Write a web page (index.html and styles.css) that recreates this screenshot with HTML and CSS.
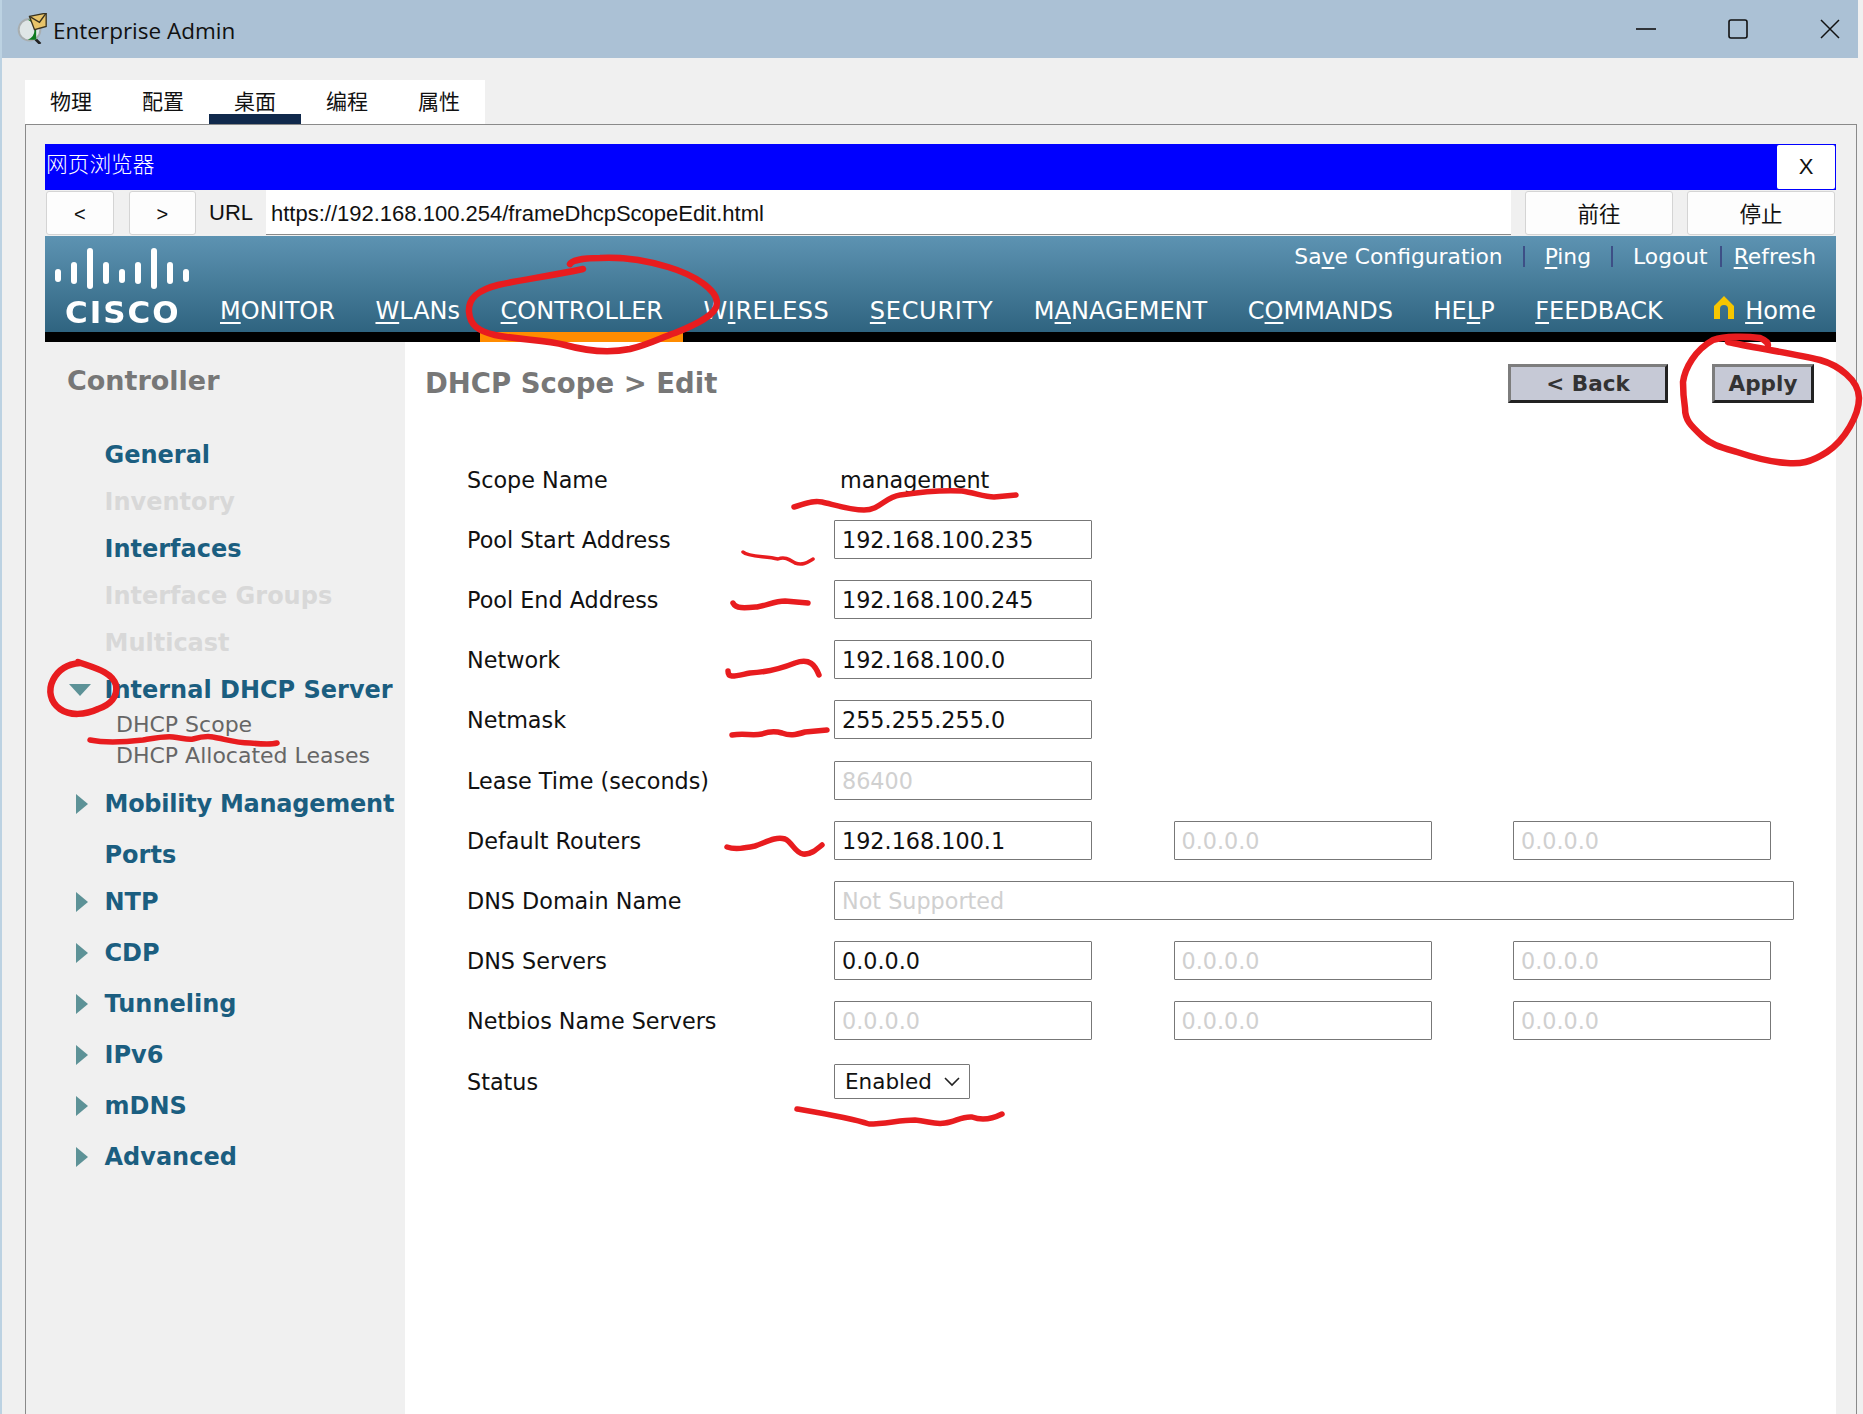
FILE: index.html
```html
<!DOCTYPE html>
<html lang="zh">
<head>
  <meta charset="UTF-8">
  <title>Enterprise Admin</title>
  <link rel="stylesheet" href="styles.css">
</head>
<body>
  <div class="page">
    <div class="titlebar">
      <svg class="app-icon" width="30" height="31" viewBox="0 0 36 37">
        <line x1="19" y1="28" x2="28" y2="37" stroke="#222" stroke-width="3.4"/>
        <circle cx="15" cy="20" r="13" fill="#dfe6e6" stroke="#a8aeb0" stroke-width="2.4"/>
        <path d="M13 8h10v24h-10a13 13 0 0 0 0-24z" fill="#0e7a1e"/>
        <path d="M15 4l20-4v16l-14 4z" fill="#e8c46a" stroke="#3a3320" stroke-width="1.6"/>
        <path d="M15 4l12 7 8-11" fill="none" stroke="#3a3320" stroke-width="1.6"/>
      </svg>
      <span class="app-name">Enterprise Admin</span>
      <div class="win-controls">
        <svg width="20" height="20" viewBox="0 0 20 20"><line x1="0" y1="10" x2="20" y2="10" stroke="#111" stroke-width="1.6"/></svg>
        <svg width="20" height="20" viewBox="0 0 20 20"><rect x="1" y="1" width="18" height="18" rx="2" fill="none" stroke="#111" stroke-width="1.6"/></svg>
        <svg width="20" height="20" viewBox="0 0 20 20"><path d="M1 1l18 18M19 1l-18 18" stroke="#111" stroke-width="1.5"/></svg>
      </div>
    </div>

    <div class="tabs">
      <div class="tab">物理</div>
      <div class="tab">配置</div>
      <div class="tab active">桌面</div>
      <div class="tab">编程</div>
      <div class="tab">属性</div>
    </div>

    <div class="panel">
      <div class="browser-title">
        <span class="browser-name">网页浏览器</span>
        <div class="close-btn">X</div>
      </div>
      <div class="url-row">
        <div class="btn nav-btn">&lt;</div>
        <div class="btn nav-btn">&gt;</div>
        <div class="url-label">URL</div>
        <div class="url-input">https://192.168.100.254/frameDhcpScopeEdit.html</div>
        <div class="btn go-btn">前往</div>
        <div class="btn go-btn">停止</div>
      </div>

      <div class="cisco-head">
        <div class="logo">
          <svg width="140" height="44" viewBox="0 0 140 44">
            <g fill="#fff">
              <rect x="0" y="21" width="6" height="13" rx="3"/>
              <rect x="16" y="14" width="6" height="22" rx="3"/>
              <rect x="32" y="0" width="6" height="41" rx="3"/>
              <rect x="48" y="14" width="6" height="22" rx="3"/>
              <rect x="64" y="21" width="6" height="14" rx="3"/>
              <rect x="80" y="14" width="6" height="22" rx="3"/>
              <rect x="96" y="0" width="6" height="41" rx="3"/>
              <rect x="112" y="14" width="6" height="22" rx="3"/>
              <rect x="128" y="21" width="6" height="13" rx="3"/>
            </g>
          </svg>
          <div class="logo-text">CISCO</div>
        </div>
        <div class="head-right">
          <div class="top-links">
            <span>Sa<u>v</u>e Configuration</span>
            <i class="sep"></i>
            <span><u>P</u>ing</span>
            <i class="sep"></i>
            <span>Logout</span>
            <i class="sep tight"></i>
            <span><u>R</u>efresh</span>
          </div>
          <div class="main-nav">
            <span><u>M</u>ONITOR</span>
            <span><u>W</u>LANs</span>
            <span><u>C</u>ONTROLLER</span>
            <span class="spaced">W<u>I</u>RELESS</span>
            <span class="spaced more"><u>S</u>ECURITY</span>
            <span>M<u>A</u>NAGEMENT</span>
            <span>C<u>O</u>MMANDS</span>
            <span>HE<u>L</u>P</span>
            <span><u>F</u>EEDBACK</span>
            <span class="home">
              <svg width="20" height="23" viewBox="0 0 20 23"><path d="M10 0L20 10v13h-6v-10a4 4 0 0 0-8 0v10H0V10z" fill="#f7c600"/></svg>
              <span><u>H</u>ome</span>
            </span>
          </div>
        </div>
      </div>
      <div class="black-bar"><div class="orange"></div></div>

      <div class="content">
        <div class="sidebar">
          <div class="side-title">Controller</div>
          <div class="side-item first"><i class="slot"></i>General</div>
          <div class="side-item off"><i class="slot"></i>Inventory</div>
          <div class="side-item"><i class="slot"></i>Interfaces</div>
          <div class="side-item off"><i class="slot"></i>Interface Groups</div>
          <div class="side-item off"><i class="slot"></i>Multicast</div>
          <div class="side-item"><i class="slot"><b class="arrow-down"></b></i>Internal DHCP Server</div>
          <div class="side-sub first-sub">DHCP Scope</div>
          <div class="side-sub">DHCP Allocated Leases</div>
          <div class="side-item after-sub tight-text"><i class="slot"><b class="arrow"></b></i>Mobility Management</div>
          <div class="side-item far"><i class="slot"></i>Ports</div>
          <div class="side-item"><i class="slot"><b class="arrow"></b></i>NTP</div>
          <div class="side-item far"><i class="slot"><b class="arrow"></b></i>CDP</div>
          <div class="side-item far"><i class="slot"><b class="arrow"></b></i>Tunneling</div>
          <div class="side-item far"><i class="slot"><b class="arrow"></b></i>IPv6</div>
          <div class="side-item far"><i class="slot"><b class="arrow"></b></i>mDNS</div>
          <div class="side-item far"><i class="slot"><b class="arrow"></b></i>Advanced</div>
        </div>

        <div class="main">
          <div class="main-head">
            <h1>DHCP Scope &gt; Edit</h1>
            <div class="actions">
              <div class="action back">&lt; Back</div>
              <div class="action apply">Apply</div>
            </div>
          </div>

          <div class="form">
            <div class="row scope"><div class="label">Scope Name</div><div class="plain">management</div></div>
            <div class="row"><div class="label">Pool Start Address</div><div class="field">192.168.100.235</div></div>
            <div class="row"><div class="label">Pool End Address</div><div class="field">192.168.100.245</div></div>
            <div class="row"><div class="label">Network</div><div class="field">192.168.100.0</div></div>
            <div class="row"><div class="label">Netmask</div><div class="field">255.255.255.0</div></div>
            <div class="row lease"><div class="label">Lease Time (seconds)</div><div class="field dis">86400</div></div>
            <div class="row"><div class="label">Default Routers</div><div class="field">192.168.100.1</div><div class="field dis">0.0.0.0</div><div class="field dis">0.0.0.0</div></div>
            <div class="row"><div class="label">DNS Domain Name</div><div class="field dis wide">Not Supported</div></div>
            <div class="row"><div class="label">DNS Servers</div><div class="field">0.0.0.0</div><div class="field dis">0.0.0.0</div><div class="field dis">0.0.0.0</div></div>
            <div class="row"><div class="label">Netbios Name Servers</div><div class="field dis">0.0.0.0</div><div class="field dis">0.0.0.0</div><div class="field dis">0.0.0.0</div></div>
            <div class="row status"><div class="label">Status</div>
              <div class="select">Enabled
                <svg width="16" height="10" viewBox="0 0 16 10"><path d="M1 1l7 7 7-7" fill="none" stroke="#222" stroke-width="1.6"/></svg>
              </div>
            </div>
          </div>
        </div>
      </div>
    </div>
  </div>

  <!-- hand drawn red marks over the page -->
  <svg class="marks" viewBox="0 0 1863 1414" fill="none" stroke="#e81c1f" stroke-linecap="round" stroke-linejoin="round">
    <g stroke-width="6.5">
      <path d="M583 269C550 276 520 280 498 285C478 290 468 298 469 312C470 325 478 331 495 335C520 340 545 340 565 345C590 352 610 353 630 349C650 344 660 338 675 333C695 325 717 315 717 303C717 290 695 275 668 267C645 260 620 257 600 258C585 258 572 260 570 264"/>
      <path d="M1728 342C1750 347 1790 353 1820 360C1838 365 1859 380 1859 398C1859 415 1845 440 1827 452C1810 463 1800 464 1787 463C1770 462 1755 458 1737 452C1720 447 1712 445 1703 437C1690 425 1685 420 1685 408C1683 395 1683 385 1683 382C1685 368 1695 350 1713 340C1725 336 1745 336 1760 338C1765 340 1768 343 1768 345"/>
      <path d="M78 662C95 668 112 672 116 685C118 697 110 705 98 709C85 715 70 716 60 709C50 702 48 690 53 680C58 670 68 664 80 663"/>
    </g>
    <g stroke-width="5.5">
      <path d="M90 740C105 743 125 742 143 740C155 738 165 736 173 737C182 738 188 740 193 739C200 737 208 736 213 737C225 739 235 743 250 743C260 744 270 745 277 743"/>
      <path d="M794 507C805 504 812 500 822 502C835 505 850 510 864 510C880 510 885 497 900 495C920 492 945 490 962 491C975 493 985 497 994 497L1016 495"/>
      <path d="M733 603C736 609 745 608 757 607C768 605 775 601 785 601L808 603"/>
      <path d="M728 671C728 679 735 676 750 673C770 672 785 667 795 663C810 658 815 665 819 675"/>
      <path d="M732 735C745 733 752 736 762 734C770 731 775 731 782 733C790 736 795 735 805 732L827 730"/>
      <path d="M727 847C735 850 745 848 755 846C765 843 775 836 785 839C792 842 795 853 803 854C810 855 816 850 822 845"/>
      <path d="M797 1109C820 1113 850 1118 869 1124C885 1124 900 1120 915 1120C928 1121 935 1125 945 1123C955 1122 962 1116 972 1117C980 1120 990 1120 1002 1114"/>
    </g>
    <path stroke-width="3.5" d="M743 552C748 557 765 556 778 559C785 556 790 560 795 563C803 566 808 562 813 559"/>
  </svg>
</body>
</html>
```

FILE: styles.css
```css
html, body {
  margin: 0;
  padding: 0;
}
body {
  position: relative;
  width: 1863px;
  height: 1414px;
  overflow: hidden;
  background: #f0f0f0;
  font-family: "DejaVu Sans", sans-serif;
  color: #111;
}
.page {
  display: flex;
  flex-direction: column;
  height: 100%;
  box-sizing: border-box;
  border-left: 2px solid #bcd2e2;
}
.marks {
  position: absolute;
  left: 0;
  top: 0;
  width: 1863px;
  height: 1414px;
  pointer-events: none;
}

/* window title */
.titlebar {
  display: flex;
  align-items: center;
  height: 58px;
  margin-right: 5px;
  padding: 0 18px 0 15px;
  background: #abc1d5;
  flex: none;
}
.app-icon {
  margin-right: 6px;
  margin-top: -2px;
  flex: none;
}
.app-name {
  font-family: "Open Sans", sans-serif;
  font-size: 22.5px;
  margin-top: 2px;
}
.win-controls {
  display: flex;
  gap: 72px;
  margin-left: auto;
}

/* tabs */
.tabs {
  display: flex;
  width: 460px;
  height: 44px;
  margin: 22px 0 0 23px;
  background: white;
  flex: none;
}
.tab {
  width: 92px;
  box-sizing: border-box;
  text-align: center;
  padding-top: 5px;
  font-family: "Noto Sans CJK SC", sans-serif;
  font-size: 21px;
  line-height: 30px;
}
.tab.active {
  border-bottom: 10px solid #10294c;
}

/* panel */
.panel {
  display: flex;
  flex-direction: column;
  flex: 1;
  min-height: 0;
  margin: 0 6px 0 23px;
  padding: 19px 20px 0 19px;
  border: 1px solid #8a8a8a;
  border-bottom: none;
}
.browser-title {
  display: flex;
  justify-content: space-between;
  align-items: center;
  height: 46px;
  padding: 0 1px;
  background: #0000ff;
  color: white;
  font-family: "Noto Sans CJK SC", sans-serif;
  font-size: 21.7px;
  font-weight: 300;
  flex: none;
}
.browser-name {
  margin-top: -9px;
}
.close-btn {
  width: 58px;
  height: 44px;
  line-height: 44px;
  text-align: center;
  background: white;
  color: #111;
  border-radius: 2px;
  font-family: "Liberation Sans", sans-serif;
  font-size: 22px;
}
.url-row {
  display: flex;
  align-items: flex-start;
  height: 46px;
  padding-left: 1px;
  font-family: "Liberation Sans", sans-serif;
  font-size: 22px;
  flex: none;
}
.btn {
  height: 44px;
  line-height: 44px;
  margin-top: 1px;
  box-sizing: border-box;
  text-align: center;
  background: #fdfdfd;
  border: 1px solid #d4d4d4;
  border-radius: 3px;
  font-size: 20px;
}
.nav-btn {
  width: 67.5px;
  margin-right: 15px;
}
.url-label {
  width: 70px;
  margin-left: -15px;
  padding-left: 13px;
  box-sizing: border-box;
  line-height: 45px;
  color: #111;
}
.url-input {
  width: 1245px;
  height: 45px;
  line-height: 47px;
  padding-left: 5px;
  box-sizing: border-box;
  background: white;
  border-bottom: 1px solid #8a8a8a;
}
.go-btn {
  width: 148px;
  margin-left: 14px;
  font-family: "Noto Sans CJK SC", sans-serif;
  font-size: 21.5px;
  line-height: 41px;
}

/* cisco header */
.cisco-head {
  display: flex;
  height: 96px;
  color: white;
  background: linear-gradient(#5d93b2, #2f6480);
  flex: none;
}
.logo {
  width: 175px;
  padding: 12px 0 0 10px;
  box-sizing: border-box;
}
.logo svg {
  display: block;
  filter: blur(0.5px);
}
.logo-text {
  margin: 2px 0 0 10px;
  font-weight: bold;
  font-size: 31px;
  line-height: 36px;
  letter-spacing: 2px;
  filter: blur(0.5px);
}
.head-right {
  display: flex;
  flex-direction: column;
  justify-content: space-between;
  flex: 1;
  padding: 5px 20px 6px 0;
}
.top-links {
  display: flex;
  justify-content: flex-end;
  align-items: center;
  height: 30px;
  font-size: 21.8px;
}
.sep {
  width: 2px;
  height: 21px;
  margin: 0 20px;
  background: #3d4f86;
}
.sep.tight {
  margin: 0 12px;
}
.main-nav {
  display: flex;
  align-items: center;
  gap: 40.6px;
  height: 30px;
  font-size: 24px;
  white-space: nowrap;
}
.spaced {
  letter-spacing: 0.5px;
}
.spaced.more {
  letter-spacing: 0.7px;
}
.cisco-head u {
  text-underline-offset: 3px;
}
.home {
  display: flex;
  align-items: center;
  gap: 11px;
  margin-left: auto;
}
.home svg {
  margin-top: -7px;
}
.black-bar {
  height: 10px;
  background: black;
  flex: none;
}
.orange {
  width: 203px;
  height: 10px;
  margin-left: 435px;
  background: #ff8c00;
}

/* lower part */
.content {
  display: flex;
  flex: 1;
  min-height: 0;
}
.sidebar {
  width: 360px;
  padding: 21px 0 0 22px;
  box-sizing: border-box;
  flex: none;
}
.side-title {
  font-size: 27px;
  font-weight: bold;
  line-height: 36px;
  color: #777;
}
.side-item {
  display: flex;
  align-items: center;
  height: 30px;
  margin-top: 17px;
  font-size: 24px;
  font-weight: bold;
  color: #1b5e80;
  white-space: nowrap;
}
.side-item.first {
  margin-top: 41px;
}
.side-item.off {
  color: #d8d8d8;
}
.side-item.far {
  margin-top: 21px;
}
.side-item.after-sub {
  margin-top: 19px;
}
.side-item.tight-text {
  letter-spacing: -0.25px;
}
.slot {
  display: flex;
  align-items: center;
  width: 37.5px;
  flex: none;
}
.arrow {
  width: 0;
  height: 0;
  margin-left: 9px;
  border-left: 12px solid #5d9297;
  border-top: 10px solid transparent;
  border-bottom: 10px solid transparent;
  filter: blur(0.7px);
}
.arrow-down {
  width: 0;
  height: 0;
  margin-left: 2px;
  border-top: 12px solid #5d9297;
  border-left: 11px solid transparent;
  border-right: 11px solid transparent;
  filter: blur(0.7px);
}
.side-sub {
  height: 28px;
  line-height: 28px;
  margin: 3px 0 0 49px;
  font-size: 22px;
  color: #666;
  white-space: nowrap;
}
.side-sub.first-sub {
  margin-top: 6px;
}

.main {
  flex: 1;
  min-width: 0;
  padding: 22px 22px 0 20px;
  background: white;
}
.main-head {
  display: flex;
  justify-content: space-between;
  align-items: center;
  height: 39px;
}
h1 {
  margin: -2px 0 0;
  font-size: 27.5px;
  font-weight: bold;
  color: #777;
}
.actions {
  display: flex;
  gap: 44px;
}
.action {
  height: 39px;
  box-sizing: border-box;
  line-height: 34px;
  text-align: center;
  background: #c6c9d6;
  border: 3px solid;
  border-color: #7d7d7d #222 #222 #7d7d7d;
  font-size: 21.5px;
  font-weight: bold;
  color: #333;
}
.action.back {
  width: 160px;
}
.action.apply {
  width: 102px;
}

.form {
  margin: 58px 0 0 42px;
  font-size: 22.3px;
}
.row {
  display: flex;
  align-items: center;
  height: 39px;
  margin-bottom: 21px;
}
.row.scope {
  height: 38px;
}
.row.scope .label {
  padding-top: 0;
}
.row.lease {
  margin-top: 22px;
}
.row.status {
  height: 35px;
  margin-top: 24px;
}
.label {
  width: 367px;
  padding-top: 1px;
  flex: none;
}
.plain {
  margin-left: 6px;
}
.field {
  width: 258px;
  height: 39px;
  line-height: 38px;
  margin-right: 81.5px;
  padding-left: 7px;
  box-sizing: border-box;
  border: 1px solid #777;
  border-radius: 1px;
  flex: none;
}
.field:last-child {
  margin-right: 0;
}
.field.dis {
  color: #d0d0d0;
}
.field.wide {
  width: 960px;
}
.select {
  display: flex;
  align-items: center;
  justify-content: space-between;
  width: 136px;
  height: 35px;
  padding: 0 9px 0 10px;
  box-sizing: border-box;
  border: 1px solid #777;
  border-radius: 1px;
  font-size: 21.5px;
}
```
